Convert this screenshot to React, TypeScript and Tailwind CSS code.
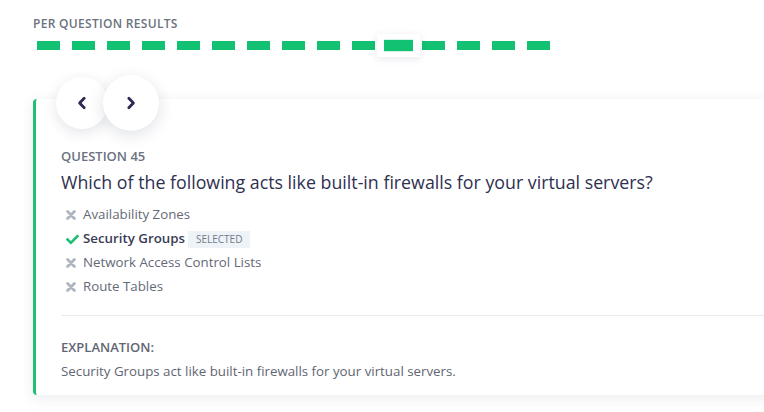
import { FaCheck } from 'react-icons/fa';

type Option = { label: string; selected?: boolean; correct?: boolean };

const options: Option[] = [
  { label: 'Availability Zones' },
  { label: 'Security Groups', selected: true, correct: true },
  { label: 'Network Access Control Lists' },
  { label: 'Route Tables' },
];

const TOTAL = 15;
const CURRENT = 10;

// heavy gray cross used for wrong answers
const Cross = () => (
  <svg viewBox="0 0 10 10" className="h-[10px] w-[10px]" fill="none" stroke="#aeb5bf" strokeWidth={2.8} strokeLinecap="round">
    <path d="M1.6 1.6l6.8 6.8M8.4 1.6l-6.8 6.8" />
  </svg>
);

const Chevron = ({ dir }: { dir: 'left' | 'right' }) => (
  <svg viewBox="0 0 10 14" className="h-[14px] w-[10px]" fill="none" stroke="currentColor" strokeWidth={2.8} strokeLinecap="round" strokeLinejoin="round">
    <path d={dir === 'left' ? 'M7.2 2.2L2.6 7l4.6 4.8' : 'M2.8 2.2L7.4 7l-4.6 4.8'} />
  </svg>
);

export default function App() {
  return (
    <main className="min-h-screen overflow-hidden bg-white pl-[33px] pt-[15px] font-['Open_Sans',sans-serif]">
      <h2 className="text-[12px] font-semibold leading-[18px] tracking-[0.3px] text-[#6b7280]">PER QUESTION RESULTS</h2>

      {/* dash strip */}
      <div className="mt-[8px] flex gap-[12px] pl-[4px]">
        {Array.from({ length: TOTAL }).map((_, i) =>
          i === CURRENT ? (
            <div key={i} className="relative h-[9px] w-[23px]">
              <span className="absolute -inset-x-[10px] -inset-y-[7px] bg-white shadow-[0_2px_8px_rgba(30,40,80,0.10)]" />
              <span className="absolute inset-0 scale-[1.26] bg-[#12c171]" />
            </div>
          ) : (
            <div key={i} className="h-[9px] w-[23px] bg-[#12c171]" />
          )
        )}
      </div>

      {/* nav buttons */}
      <div className="relative z-10 mt-[25px] flex items-center pl-[23px]">
        <button className="flex h-[52px] w-[52px] items-center justify-center rounded-full bg-white text-[#2b2a52] shadow-[0_4px_14px_rgba(30,40,80,0.12)]">
          <Chevron dir="left" />
        </button>
        <button className="-ml-[5px] flex h-[56px] w-[56px] items-center justify-center rounded-full bg-white text-[#2b2a52] shadow-[0_4px_16px_rgba(30,40,80,0.14)]">
          <Chevron dir="right" />
        </button>
      </div>

      {/* card */}
      <section className="-mt-[32px] w-[790px] rounded-l-[4px] border-l-[3px] border-[#1fbf75] bg-white pb-[13px] pl-[25px] pt-[47px] shadow-[0_3px_14px_rgba(30,40,80,0.09)]">
        <p className="text-[13px] font-semibold leading-[20px] text-[#6b7280]">QUESTION 45</p>
        <h1 className="mt-[3px] text-[17.8px] font-medium leading-[26px] text-[#2e3050]">
          Which of the following acts like built-in firewalls for your virtual servers?
        </h1>

        <ul className="mt-[8px]">
          {options.map((o) => (
            <li key={o.label} className="flex h-[24px] items-center text-[13.3px]">
              <span className="flex w-[22px] items-center pl-[5px]">
                {o.correct ? <FaCheck className="h-[13px] w-[13px] text-[#1fbf75]" /> : <Cross />}
              </span>
              <span className={o.selected ? 'font-semibold text-[#3a3c56]' : 'text-[#646a76]'}>{o.label}</span>
              {o.selected && (
                <span className="ml-[3px] flex h-[17px] items-center bg-[#eef3f8] px-[8px] text-[10px] uppercase text-[#6e7a8a]">
                  Selected
                </span>
              )}
            </li>
          ))}
        </ul>

        <div className="mt-[16px] border-t border-[#e8eaee] pt-[21px]">
          <p className="text-[13px] font-semibold leading-[20px] text-[#5f6572]">EXPLANATION:</p>
          <p className="mt-[3px] text-[13.3px] leading-[22px] text-[#5f6572]">
            Security Groups act like built-in firewalls for your virtual servers.
          </p>
        </div>
      </section>
    </main>
  );
}
